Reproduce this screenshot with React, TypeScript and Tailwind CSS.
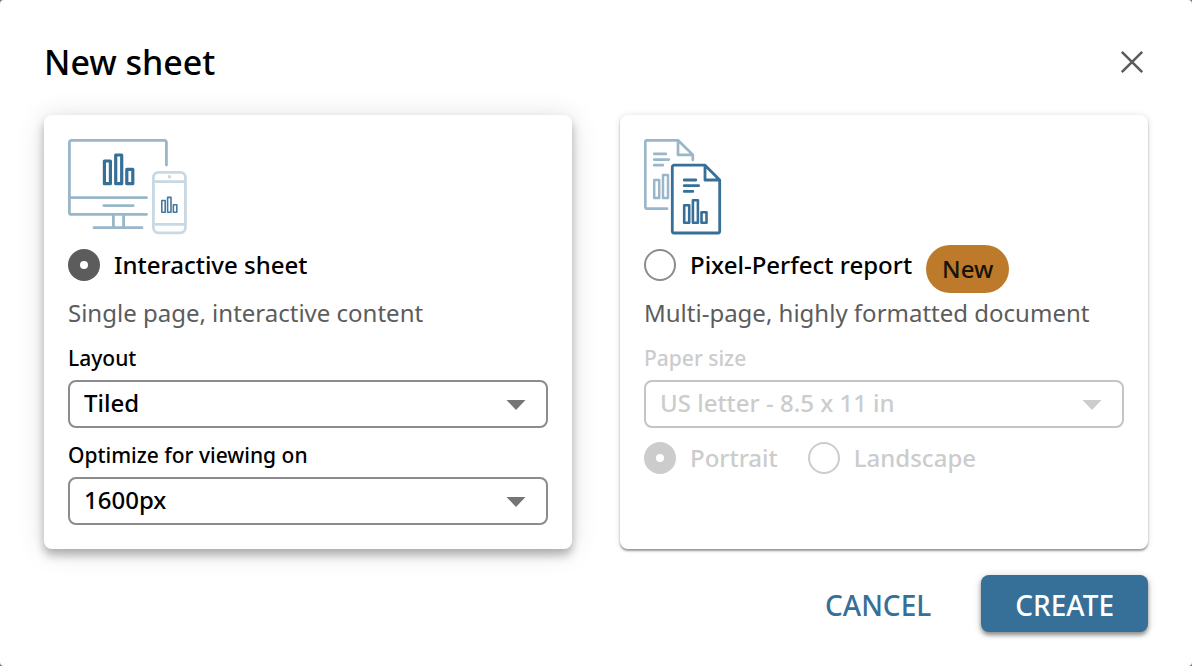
import { useState } from "react";
import type { ReactNode } from "react";

function ScreensIcon() {
  return (
    <svg viewBox="0 0 120 96" className="h-24 w-30" fill="none" strokeLinecap="round" strokeLinejoin="round" aria-hidden="true">
      <g stroke="#9ab6c9" strokeWidth="2.8">
        <path d="M98.4 26V3.4a2 2 0 0 0-2-2H3.4a2 2 0 0 0-2 2v70a2 2 0 0 0 2 2H78.5" />
        <path d="M2 58.7h76.5M35.8 66.6h29.4M45.4 75.4v13M55.6 75.4v13M26 88.7h48" />
      </g>
      <g stroke="#366f97" strokeWidth="3.2">
        <path d="M36.4 22h6v22.7h-6zM47.7 16h6v28.7h-6zM58.8 30.4h6v14.3h-6z" />
      </g>
      <g stroke="#c9d9e4" strokeWidth="2.8">
        <rect x="85.4" y="33.4" width="32" height="60.4" rx="5" />
        <path d="M86 42.7h31M86 85.4h31" />
      </g>
      <circle cx="101.4" cy="37.8" r="1.7" fill="#c9d9e4" />
      <g stroke="#4479a0" strokeWidth="1.6">
        <path d="M93.8 61.5h3.4v11.7h-3.4zM99.6 58.4h3.4v14.8h-3.4zM105.4 65.8h3.4v7.4h-3.4z" />
      </g>
    </svg>
  );
}

function DocumentsIcon() {
  return (
    <svg viewBox="0 0 78 96" className="h-24 w-[78px]" fill="none" strokeLinecap="round" strokeLinejoin="round" aria-hidden="true">
      <g stroke="#9ab6c9" strokeWidth="2.7">
        <path d="M23 69.7H3a1.7 1.7 0 0 1-1.7-1.7V3A1.7 1.7 0 0 1 3 1.3h31L48.8 15.8V21M34 1.8v14h14" />
        <path d="M10.2 14.8h11.6M10.2 20.6h14.6M10.2 26.2h8.6" />
      </g>
      <g stroke="#9ab6c9" strokeWidth="2.5">
        <path d="M10.2 41h5v18h-5zM19 36h5v23h-5z" />
      </g>
      <g stroke="#366f97" strokeWidth="2.8">
        <path d="M61 26.2H30a1.7 1.7 0 0 0-1.7 1.7v64.4A1.7 1.7 0 0 0 30 94h44a1.7 1.7 0 0 0 1.7-1.7V41zM61 26.6V41h14.4" />
        <path d="M40.2 41h11.6M40.2 46.7h14.4M40.2 52.4h8.6" />
      </g>
      <g stroke="#366f97" strokeWidth="2.6">
        <path d="M40.2 66.2h5v17.6h-5zM48.9 61.2h5v22.6h-5zM57.5 73.2h5v10.6h-5z" />
      </g>
    </svg>
  );
}

const radioClass =
  "size-8 shrink-0 appearance-none rounded-full border-2 border-[#8c8c8c] bg-white checked:border-[12px] checked:border-[#5c5c5c] disabled:border-[#cccccc] disabled:checked:border-[#cccccc]";

function Radio(props: {
  name: string;
  label: string;
  checked: boolean;
  disabled?: boolean;
  onChange: () => void;
}) {
  return (
    <label className={`flex h-8 items-center gap-[14px] text-2xl font-medium ${props.disabled ? "text-[#cccccc]" : "text-black"}`}>
      <input type="radio" name={props.name} checked={props.checked} disabled={props.disabled} onChange={props.onChange} className={radioClass} />
      {props.label}
    </label>
  );
}

function SelectField(props: { id: string; label: string; options: string[]; disabled?: boolean }) {
  return (
    <div className={`mt-3 font-medium ${props.disabled ? "text-[#cccccc]" : "text-black"}`}>
      <label htmlFor={props.id} className="mb-[6px] block text-[21px] leading-[31px]">
        {props.label}
      </label>
      <div className="relative">
        <select
          id={props.id}
          disabled={props.disabled}
          className="block h-12 w-full appearance-none rounded-lg border-2 border-[#8c8c8c] bg-white pr-14 pb-[2px] pl-[14px] text-2xl disabled:border-[#c4c4c4] disabled:opacity-100"
        >
          {props.options.map((option) => (
            <option key={option}>{option}</option>
          ))}
        </select>
        <svg
          viewBox="0 0 20 10"
          className={`pointer-events-none absolute top-5 right-[22px] h-[10px] w-5 ${props.disabled ? "text-[#cccccc]" : "text-[#757575]"}`}
          fill="currentColor"
          aria-hidden="true"
        >
          <path d="M.5 0h19L10 10z" />
        </svg>
      </div>
    </div>
  );
}

function Card({ selected, children }: { selected: boolean; children: ReactNode }) {
  return (
    <section
      className={`min-w-0 flex-1 rounded-lg bg-white p-6 ${
        selected
          ? "shadow-[0_6px_10px_rgba(0,0,0,0.28),0_2px_28px_rgba(0,0,0,0.13)]"
          : "shadow-[0_2px_2px_rgba(0,0,0,0.36),0_0_6px_rgba(0,0,0,0.12)]"
      }`}
    >
      {children}
    </section>
  );
}

export default function App() {
  const [kind, setKind] = useState("interactive");
  const [orientation, setOrientation] = useState("portrait");
  const interactive = kind === "interactive";

  return (
    <div className="min-h-screen bg-[#7a7a7a] font-['Noto_Sans',sans-serif]">
      <main role="dialog" aria-labelledby="dialog-title" className="min-h-screen rounded-[4px] bg-white px-11 pt-[38px] pb-[34px]">
        <header className="flex h-12 items-center justify-between">
          <h1 id="dialog-title" className="text-[34px] leading-[48px] font-medium text-black">
            New sheet
          </h1>
          <button type="button" aria-label="Close" className="flex size-8 items-center justify-center">
            <svg viewBox="0 0 24 24" className="size-6" fill="none" stroke="#5c5c5c" strokeWidth="2.6" aria-hidden="true">
              <path d="M1.8 1.8l20.4 20.4M22.2 1.8L1.8 22.2" />
            </svg>
          </button>
        </header>

        <div className="mt-[29px] flex gap-12">
          <Card selected={interactive}>
            <ScreensIcon />
            <div className="mt-[14px] flex h-8">
              <Radio name="kind" label="Interactive sheet" checked={interactive} onChange={() => setKind("interactive")} />
            </div>
            <p className="mt-4 mb-[14px] text-2xl leading-8 text-[#5c5c5c]">Single page, interactive content</p>
            <SelectField id="layout" label="Layout" options={["Tiled", "Free-form"]} disabled={!interactive} />
            <SelectField id="viewing" label="Optimize for viewing on" options={["1600px", "1280px"]} disabled={!interactive} />
          </Card>

          <Card selected={!interactive}>
            <DocumentsIcon />
            <div className="mt-[14px] flex h-8 items-start gap-[14px]">
              <Radio name="kind" label="Pixel-Perfect report" checked={!interactive} onChange={() => setKind("report")} />
              <span className="-mt-1 flex h-12 items-center rounded-full bg-[#bc7a2a] px-4 text-2xl font-medium text-[#16120c]">New</span>
            </div>
            <p className="mt-4 mb-[14px] text-2xl leading-8 text-[#5c5c5c]">Multi-page, highly formatted document</p>
            <SelectField id="paper" label="Paper size" options={["US letter - 8.5 x 11 in", "A4 - 210 x 297 mm"]} disabled={interactive} />
            <div className="mt-[14px] flex gap-[30px]">
              <Radio name="orientation" label="Portrait" checked={orientation === "portrait"} disabled={interactive} onChange={() => setOrientation("portrait")} />
              <Radio name="orientation" label="Landscape" checked={orientation === "landscape"} disabled={interactive} onChange={() => setOrientation("landscape")} />
            </div>
          </Card>
        </div>

        <footer className="mt-[26px] flex justify-end gap-4">
          <button type="button" className="h-[57px] px-[34px] pt-[2px] text-[28px] font-medium text-[#366f97]">
            CANCEL
          </button>
          <button
            type="button"
            className="h-[57px] rounded-lg bg-[#366f97] px-[34px] pt-[2px] text-[28px] font-medium text-white shadow-[0_3px_4px_rgba(0,0,0,0.4),0_1px_10px_rgba(0,0,0,0.15)]"
          >
            CREATE
          </button>
        </footer>
      </main>
    </div>
  );
}
